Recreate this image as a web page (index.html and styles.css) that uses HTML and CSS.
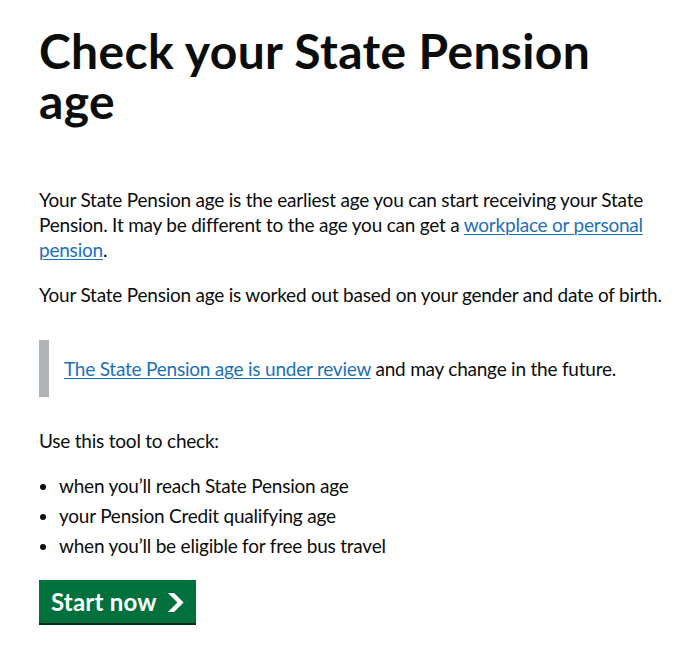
FILE: index.html
```html
<!DOCTYPE html>
<html lang="en">
<head>
<meta charset="utf-8">
<title>Check your State Pension age</title>
<link rel="stylesheet" href="styles.css">
</head>
<body>
<main class="page">
  <h1 class="heading-xl">Check your State Pension age</h1>
  <p class="body">Your State Pension age is the earliest age you can start receiving your State Pension. It may be different to the age you can get a <a class="link" href="#">workplace or personal pension</a>.</p>
  <p class="body">Your State Pension age is worked out based on your gender and date of birth.</p>
  <div class="inset">
    <a class="link" href="#">The State Pension age is under review</a> and may change in the future.
  </div>
  <p class="body">Use this tool to check:</p>
  <ul class="bullets">
    <li>when you’ll reach State Pension age</li>
    <li>your Pension Credit qualifying age</li>
    <li>when you’ll be eligible for free bus travel</li>
  </ul>
  <a class="button-start" href="#" role="button">Start now
    <svg class="start-icon" xmlns="http://www.w3.org/2000/svg" width="17.5" height="19" viewBox="0 0 33 40" aria-hidden="true" focusable="false"><path fill="currentColor" d="M0 0h13l20 20-20 20H0l20-20z"/></svg>
  </a>
</main>
</body>
</html>
```
FILE: styles.css
```css
html, body {
  margin: 0;
  padding: 0;
  background: #ffffff;
}
body {
  font-family: Lato, "Liberation Sans", Arial, sans-serif;
  color: #0b0c0c;
}
.page {
  padding: 26px 15px 20px 39px;
}
.heading-xl {
  max-width: 580px;
  margin: 0 0 61px 0;
  font-size: 48px;
  line-height: 50px;
  font-weight: 700;
  letter-spacing: 0.35px;
}
.body {
  margin: 0 0 20px 0;
  font-size: 19px;
  line-height: 25px;
  letter-spacing: -0.22px;
}
.link {
  color: #1d70b8;
  text-decoration: underline;
  text-underline-offset: 0.12em;
  text-decoration-thickness: 1px;
}
.inset {
  margin: 33px 0 31px 0;
  padding: 16px 15px;
  border-left: 10px solid #b1b4b6;
  font-size: 19px;
  line-height: 25px;
  letter-spacing: -0.22px;
}
.bullets {
  margin: 0 0 22px 0;
  padding: 0 0 0 20px;
  font-size: 19px;
  line-height: 25px;
  letter-spacing: -0.22px;
  list-style: disc;
}
.bullets li {
  margin-bottom: 5px;
}
.button-start {
  display: inline-flex;
  align-items: center;
  padding: 8px 10px 7px;
  border: 2px solid transparent;
  background: #00703c;
  box-shadow: 0 2px 0 #002d18;
  color: #ffffff;
  font-size: 24px;
  line-height: 1;
  font-weight: 700;
  letter-spacing: 0.2px;
  text-decoration: none;
}
.start-icon {
  margin-left: 10px;
  flex: none;
}
```
